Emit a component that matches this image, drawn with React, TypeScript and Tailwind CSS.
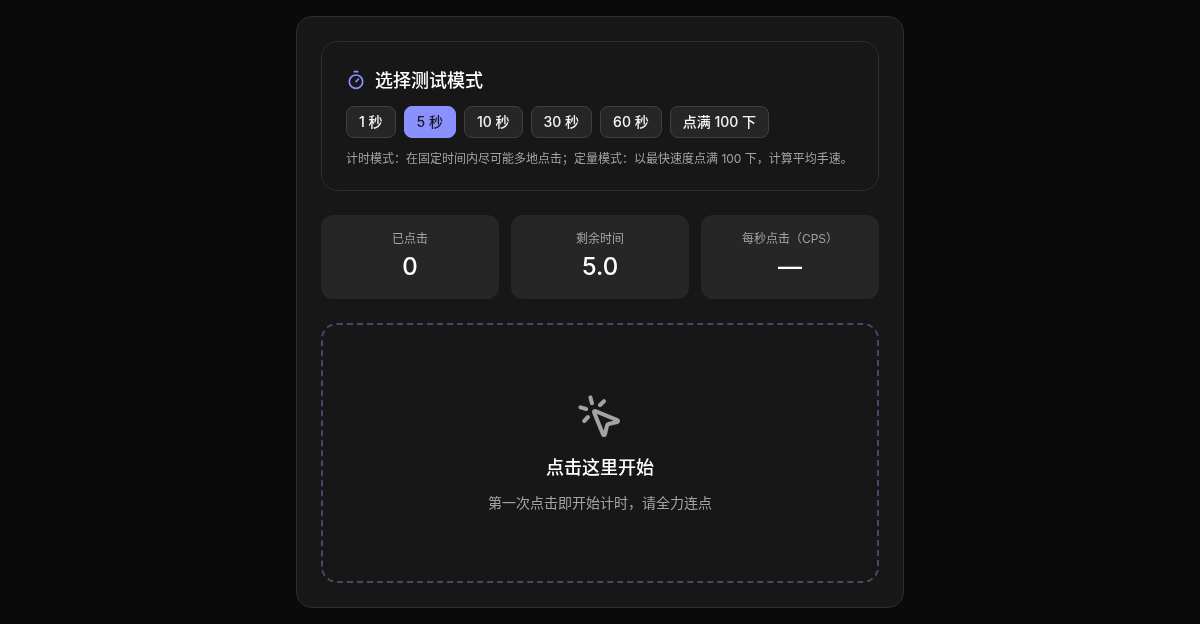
import { MousePointerClick, Timer } from 'lucide-react';

const modes = ['1 秒', '5 秒', '10 秒', '30 秒', '60 秒', '点满 100 下'];

const stats = [
  { label: '已点击', value: '0' },
  { label: '剩余时间', value: '5.0' },
  { label: '每秒点击（CPS）', value: '—' },
];

export default function App() {
  return (
    <div className="h-[624px] w-full overflow-hidden bg-[#0a0a0a] pt-4 font-['Inter','Noto_Sans_CJK_SC',sans-serif] text-white">
      <div className="mx-auto flex h-[592px] w-[608px] flex-col gap-6 rounded-2xl border border-[#2e2e2e] bg-[#171717] p-6 will-change-transform">
        <section className="h-[150px] rounded-2xl border border-[#2e2e2e] bg-[#171717] p-6">
          <div className="flex h-7 items-center gap-[9px]">
            <Timer className="h-5 w-5 text-[#8b90ff]" strokeWidth={2} />
            <h2 className="pt-0.5 text-lg leading-7 font-medium">选择测试模式</h2>
          </div>
          <div className="mt-3 flex gap-2">
            {modes.map((mode) => (
              <button
                key={mode}
                className={
                  mode === '5 秒'
                    ? 'h-8 rounded-lg border border-[#8b90ff] bg-[#8b90ff] px-3 text-sm font-medium text-[#171717]'
                    : 'h-8 rounded-lg border border-[#404040] bg-[#262626] px-3 text-sm font-medium text-[#f5f5f5]'
                }
              >
                {mode}
              </button>
            ))}
          </div>
          <p className="mt-[11px] text-xs leading-5 text-[#a3a3a3]">
            计时模式：在固定时间内尽可能多地点击；定量模式：以最快速度点满 100 下，计算平均手速。
          </p>
        </section>

        <div className="grid grid-cols-3 gap-3">
          {stats.map((stat) => (
            <div key={stat.label} className="flex h-[84px] flex-col items-center rounded-xl bg-[#262626] pt-4">
              <span className="text-xs leading-4 text-[#a3a3a3]">{stat.label}</span>
              <span className="mt-1 text-2xl leading-8 font-medium">{stat.value}</span>
            </div>
          ))}
        </div>

        <button className="flex h-[260px] flex-col items-center justify-center rounded-2xl border-2 border-dashed border-[#4a4668] bg-[#171717]">
          <MousePointerClick className="h-12 w-12 text-[#a3a3a3]" strokeWidth={2} />
          <span className="mt-[13px] text-lg leading-7 font-medium">点击这里开始</span>
          <span className="mt-[11px] text-sm leading-5 text-[#a3a3a3]">第一次点击即开始计时，请全力连点</span>
        </button>
      </div>
    </div>
  );
}
